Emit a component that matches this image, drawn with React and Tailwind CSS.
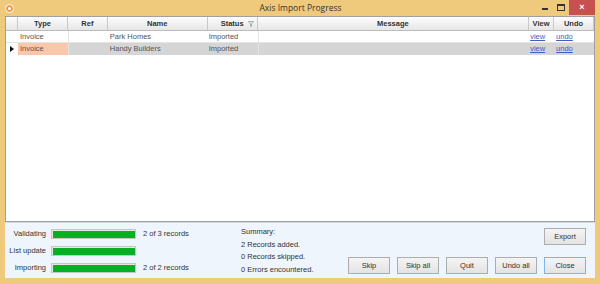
import React from "react";

const cols = [
  { key: "type", label: "Type", w: "w-[50px]" },
  { key: "ref", label: "Ref", w: "w-[40px]" },
  { key: "name", label: "Name", w: "w-[100px]" },
  { key: "status", label: "Status", w: "w-[50px]" },
  { key: "message", label: "Message", w: "w-[272px]" },
  { key: "view", label: "View", w: "w-[25px]" },
  { key: "undo", label: "Undo", w: "w-[40px]" },
];

const rows = [
  { type: "Invoice", ref: "", name: "Park Homes", status: "Imported", message: "" },
  { type: "Invoice", ref: "", name: "Handy Builders", status: "Imported", message: "", current: true },
];

const progress = [
  { label: "Validating", text: "2 of 3 records" },
  { label: "List update", text: "" },
  { label: "Importing", text: "2 of 2 records" },
];

function Btn({ children, active }) {
  return (
    <button
      className={`w-[42px] h-[17px] text-[7.5px] text-[#333] bg-gradient-to-b from-[#f4f4f4] to-[#e3e3e3] border ${
        active ? "border-[#7eb4ea]" : "border-[#adadad]"
      }`}
    >
      {children}
    </button>
  );
}

export default function App() {
  return (
    <div
      className="w-[600px] h-[284px] bg-[#f0ca7c] flex flex-col"
      style={{ fontFamily: "'Liberation Sans', Arial, sans-serif" }}
    >
      {/* title bar */}
      <div className="h-[16px] flex items-center relative">
        <div className="ml-[5px] w-[9px] h-[9px] rounded-full bg-[#f39a3a] border border-white flex items-center justify-center">
          <div className="w-[3px] h-[3px] rounded-full bg-white" />
        </div>
        <div className="flex-1 text-center text-[8.5px] text-[#333] pl-[50px]" style={{ fontFamily: "'Open Sans', sans-serif" }}>
          Axis Import Progress
        </div>
        <div className="flex items-start self-start h-[16px]">
          <div className="w-[16px] h-[14px] flex items-end justify-center pb-[4px]">
            <div className="w-[6px] h-[2px] bg-[#333]" />
          </div>
          <div className="w-[16px] h-[14px] flex items-center justify-center">
            <div className="w-[8px] h-[7px] border border-[#333] border-t-2" />
          </div>
          <div className="w-[26px] h-[15px] mr-[5px] bg-[#c75050] flex items-center justify-center text-white text-[9px] font-bold">
            ×
          </div>
        </div>
      </div>

      <div className="flex-1 flex flex-col px-[5px] pb-[6px]">
        {/* grid */}
        <div className="flex-1 bg-white border border-[#a0a0a0] flex flex-col text-[7.5px]">
          <div className="flex h-[14px] bg-gradient-to-b from-[#fdfdfd] to-[#e6e6e6] border-b border-[#bcbcbc]">
            <div className="w-[12px] border-r border-[#c8c8c8]" />
            {cols.map((c) => (
              <div
                key={c.key}
                className={`${c.w} border-r border-[#c8c8c8] flex items-center justify-center font-bold text-[#333] relative`}
              >
                {c.label}
                {c.key === "status" && (
                  <svg className="absolute right-[3px] top-[4px]" width="6" height="6" viewBox="0 0 6 6">
                    <path d="M0.5 0.5 H5.5 L3.5 3 V5.5 L2.5 5 V3 Z" fill="none" stroke="#999" strokeWidth="0.8" />
                  </svg>
                )}
              </div>
            ))}
          </div>
          {rows.map((r, i) => (
            <div
              key={i}
              className={`flex h-[12px] text-[#555] ${r.current ? "bg-[#d5d5d5]" : "bg-white border-b border-[#e4e4e4]"}`}
            >
              <div className="w-[12px] bg-white flex items-center justify-center">
                {r.current && (
                  <svg width="4" height="6" viewBox="0 0 4 6">
                    <path d="M0 0 L4 3 L0 6 Z" fill="#111" />
                  </svg>
                )}
              </div>
              <div className={`w-[50px] pl-[2px] flex items-center ${r.current ? "bg-[#fbc7aa]" : ""}`}>{r.type}</div>
              <div className="w-[40px] border-l border-[#e4e4e4] flex items-center">{r.ref}</div>
              <div className="w-[100px] pl-[2px] flex items-center">{r.name}</div>
              <div className="w-[50px] pl-[1px] flex items-center">{r.status}</div>
              <div className="w-[272px] border-l border-[#e4e4e4] flex items-center">{r.message}</div>
              <div className="w-[25px] pl-[1px] flex items-center">
                <span className="text-[#3d5fc4] underline">view</span>
              </div>
              <div className="w-[40px] pl-[2px] flex items-center">
                <span className="text-[#3d5fc4] underline">undo</span>
              </div>
            </div>
          ))}
        </div>

        {/* bottom panel */}
        <div className="h-[56px] bg-[#eef5fd] border-t border-[#d0d7e0] flex text-[7.5px] text-[#333]">
          <div className="w-[236px] flex flex-col justify-center gap-[7px] pt-[1px]">
            {progress.map((p) => (
              <div key={p.label} className="flex items-center h-[10px]">
                <div className="w-[41px] text-right whitespace-nowrap">{p.label}</div>
                <div className="ml-[5px] w-[85px] h-[10px] border border-[#c6c6c6] bg-[#e6e6e6] p-[0.5px]">
                  <div className="w-full h-full bg-[#06b025]" />
                </div>
                <div className="ml-[7px] whitespace-nowrap">{p.text}</div>
              </div>
            ))}
          </div>
          <div className="w-[100px] flex flex-col pt-[4px] gap-[2.5px] leading-[10px] whitespace-nowrap">
            <div>Summary:</div>
            <div>2 Records added.</div>
            <div>0 Records skipped.</div>
            <div>0 Errors encountered.</div>
          </div>
          <div className="flex-1 flex flex-col items-end justify-between pt-[5px] pb-[4px] pr-[9px]">
            <Btn>Export</Btn>
            <div className="flex gap-[7px]">
              <Btn>Skip</Btn>
              <Btn>Skip all</Btn>
              <Btn>Quit</Btn>
              <Btn>Undo all</Btn>
              <Btn active>Close</Btn>
            </div>
          </div>
        </div>
      </div>
    </div>
  );
}
